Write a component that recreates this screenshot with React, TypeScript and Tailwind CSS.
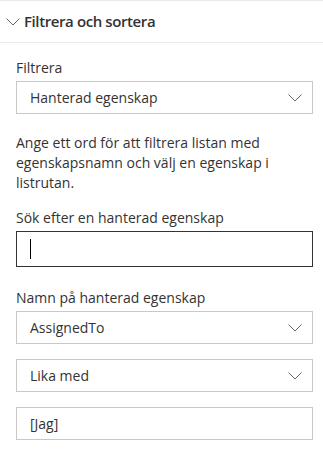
import React from 'react';

const font = { fontFamily: '"Open Sans", "Liberation Sans", sans-serif' };

function Chevron({ className }: { className?: string }) {
  return (
    <svg className={className} width="14" height="8" viewBox="0 0 14 8" fill="none">
      <path d="M0.5 0.5 L7 7 L13.5 0.5" stroke="currentColor" strokeWidth="1" />
    </svg>
  );
}

function Dropdown({ value }: { value: string }) {
  return (
    <div className="h-[33px] border border-[#c8c8c8] bg-white flex items-center pl-[13px] pr-[10px]">
      <span className="flex-1 text-[14px] text-[#333333]">{value}</span>
      <Chevron className="text-[#666666]" />
    </div>
  );
}

function Label({ children }: { children: React.ReactNode }) {
  return <div className="text-[14px] leading-5 text-[#333333] mb-[3px]">{children}</div>;
}

export default function App() {
  return (
    <div className="w-[323px] h-[453px] bg-white overflow-hidden" style={font}>
      <div className="border-t border-b border-[#eaeaea] h-[43px] flex items-center pl-[6px]">
        <Chevron className="text-[#666666] mr-[4px]" />
        <span className="text-[15px] font-semibold tracking-[-0.4px] text-[#333333]">Filtrera och sortera</span>
      </div>
      <div className="pl-4 pr-[10px] pt-[15px]">
        <Label>Filtrera</Label>
        <Dropdown value="Hanterad egenskap" />
        <p className="text-[14px] leading-5 text-[#333333] mt-[19px]">
          Ange ett ord för att filtrera listan med egenskapsnamn och välj en egenskap i listrutan.
        </p>
        <div className="mt-[15px]">
          <Label>Sök efter en hanterad egenskap</Label>
          <div className="h-[36px] border border-[#333333] flex items-center pl-[13px]">
            <span className="w-px h-5 bg-black" />
          </div>
        </div>
        <div className="mt-[21px]">
          <Label>Namn på hanterad egenskap</Label>
          <Dropdown value="AssignedTo" />
        </div>
        <div className="mt-[15px]">
          <Dropdown value="Lika med" />
        </div>
        <div className="mt-[15px] h-[33px] border border-[#c8c8c8] flex items-center pl-[13px]">
          <span className="text-[14px] text-[#333333]">[Jag]</span>
        </div>
      </div>
    </div>
  );
}
